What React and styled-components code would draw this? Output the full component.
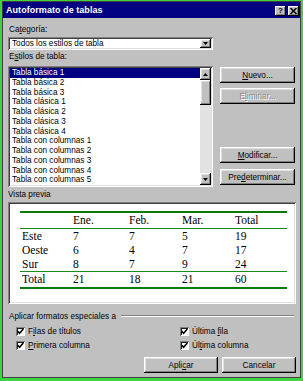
import React from 'react';
import styled, { createGlobalStyle, css } from 'styled-components';

const Global = createGlobalStyle`
  html, body { margin: 0; padding: 0; background: #3fd43f; }
  body { width: 303px; height: 381px; overflow: hidden; }
`;

const raised = css`
  box-shadow: inset -1px -1px 0 #000, inset 1px 1px 0 #fff, inset -2px -2px 0 #808080, inset 2px 2px 0 #dfdfdf;
`;
const sunken = css`
  box-shadow: inset 1px 1px 0 #808080, inset -1px -1px 0 #fff, inset 2px 2px 0 #404040, inset -2px -2px 0 #dfdfdf;
`;

const Window = styled.div`
  margin: 1px 2px 0 2px;
  width: 299px;
  height: 377px;
  box-sizing: border-box;
  border: 1px solid #404040;
  background: #c0c0c0;
  display: flex;
  flex-direction: column;
  font-family: 'Liberation Sans', Arial, sans-serif;
  font-size: 8.2px;
  color: #000;
`;

const TitleBar = styled.div`
  height: 16px;
  background: #000080;
  display: flex;
  align-items: center;
  padding: 0 1px 0 3px;
  gap: 2px;
`;

const TitleText = styled.div`
  flex: 1;
  color: #fff;
  font-weight: bold;
  font-size: 9px;
  letter-spacing: 0.05px;
`;

const TitleButton = styled.div`
  width: 11px;
  height: 10px;
  background: #c0c0c0;
  box-shadow: inset -1px -1px 0 #000, inset 1px 1px 0 #fff, inset -2px -2px 0 #808080;
  display: flex;
  align-items: center;
  justify-content: center;
  font-weight: bold;
  font-size: 8px;
  line-height: 10px;
  margin-top: 1px;
`;

const Body = styled.div`
  flex: 1;
  display: flex;
  flex-direction: column;
  padding: 7px 4px 0 5px;
`;

const Label = styled.div`
  height: 10px;
  line-height: 10px;
  margin-top: ${p => p.$mt || 0}px;
  padding-left: ${p => p.$pl || 0}px;
`;

const U = styled.span`
  text-decoration: underline;
  text-underline-offset: 1px;
`;

const Combo = styled.div`
  margin-top: 2px;
  width: 205px;
  height: 13px;
  box-sizing: border-box;
  background: #fff;
  ${sunken};
  display: flex;
  align-items: center;
  padding: 0 2px 0 4px;
`;

const ComboText = styled.div`
  flex: 1;
`;

const SmallBtn = styled.div`
  width: 11px;
  height: ${p => p.$h || 9}px;
  box-sizing: border-box;
  background: #c0c0c0;
  ${raised};
  display: flex;
  align-items: center;
  justify-content: center;
  flex-shrink: 0;
`;

const ListRow = styled.div`
  margin-top: 4px;
  display: flex;
  gap: 7px;
  align-items: flex-start;
`;

const ListBox = styled.div`
  width: 205px;
  height: 121px;
  box-sizing: border-box;
  background: #fff;
  ${sunken};
  padding: 2px;
  display: flex;
`;

const Items = styled.div`
  flex: 1;
  overflow: hidden;
`;

const Item = styled.div`
  height: 9.75px;
  line-height: 9.75px;
  padding-left: 2px;
  white-space: nowrap;
  background: ${p => (p.$sel ? '#000080' : 'transparent')};
  color: ${p => (p.$sel ? '#fff' : '#000')};
`;

const ScrollBar = styled.div`
  width: 11px;
  display: flex;
  flex-direction: column;
  background: #e2e2e2;
`;

const Track = styled.div`
  flex: 1;
`;

const Thumb = styled.div`
  height: 25px;
  background: #c0c0c0;
  ${raised};
`;

const ButtonCol = styled.div`
  width: 75px;
  display: flex;
  flex-direction: column;
  padding-top: 1px;
`;

const Button = styled.div`
  width: ${p => p.$w || 75}px;
  height: 16px;
  box-sizing: border-box;
  background: #c0c0c0;
  ${raised};
  display: flex;
  align-items: center;
  justify-content: center;
  margin-top: ${p => p.$mt || 0}px;
  color: ${p => (p.$disabled ? '#8a8a8a' : '#000')};
  text-shadow: ${p => (p.$disabled ? '1px 1px 0 #fff' : 'none')};
  white-space: nowrap;
`;

const Preview = styled.div`
  margin-top: 2px;
  height: 102px;
  box-sizing: border-box;
  background: #fff;
  ${sunken};
  padding: 9px 0 0 12px;
`;

const PTable = styled.div`
  width: 267px;
  border-top: 2px solid #0a7a0a;
  border-bottom: 2px solid #0a7a0a;
  font-family: 'Liberation Serif', 'Times New Roman', serif;
  font-size: 11.5px;
  color: #000;
`;

const PRow = styled.div`
  display: grid;
  grid-template-columns: 51px 56px 53px 53px 54px;
  height: ${p => p.$h || 14}px;
  line-height: ${p => p.$h || 14}px;
  border-bottom: ${p => (p.$line ? '1px solid #1a8a1a' : 'none')};
`;

const PCell = styled.div`
  padding-left: 2px;
`;

const GroupHead = styled.div`
  margin-top: 7px;
  height: 10px;
  display: flex;
  align-items: center;
  padding-left: 1px;
`;

const Etched = styled.div`
  flex: 1;
  margin: 0 2px 0 5px;
  height: 0;
  border-top: 1px solid #808080;
  border-bottom: 1px solid #fff;
`;

const CheckGrid = styled.div`
  margin-top: 3px;
  display: grid;
  grid-template-columns: 164px 1fr;
  padding-left: 8px;
`;

const CheckRow = styled.div`
  height: 14px;
  display: flex;
  align-items: center;
  gap: 3px;
`;

const Box = styled.div`
  width: 9px;
  height: 9px;
  box-sizing: border-box;
  background: #fff;
  box-shadow: inset 1px 1px 0 #808080, inset -1px -1px 0 #fff, inset 2px 2px 0 #202020;
  display: flex;
  align-items: center;
  justify-content: center;
`;

const Footer = styled.div`
  margin-top: 5px;
  display: flex;
  justify-content: flex-end;
  gap: 4px;
`;

const Tri = ({ dir = 'down' }) => (
  <svg width="5" height="3" viewBox="0 0 5 3">
    {dir === 'down' ? <polygon points="0,0 5,0 2.5,3" fill="#000" /> : <polygon points="0,3 5,3 2.5,0" fill="#000" />}
  </svg>
);

const Check = ({ checked = true, children }) => (
  <CheckRow>
    <Box>
      {checked && (
        <svg width="7" height="7" viewBox="0 0 7 7">
          <polyline points="0.8,3.2 2.6,5.2 6.3,1" fill="none" stroke="#000" strokeWidth="1.6" />
        </svg>
      )}
    </Box>
    <span>{children}</span>
  </CheckRow>
);

const items = [
  'Tabla básica 1', 'Tabla básica 2', 'Tabla básica 3',
  'Tabla clásica 1', 'Tabla clásica 2', 'Tabla clásica 3', 'Tabla clásica 4',
  'Tabla con columnas 1', 'Tabla con columnas 2', 'Tabla con columnas 3',
  'Tabla con columnas 4', 'Tabla con columnas 5',
];

const rows = [
  ['Este', '7', '7', '5', '19'],
  ['Oeste', '6', '4', '7', '17'],
  ['Sur', '8', '7', '9', '24'],
];

export default function App() {
  return (
    <>
      <Global />
      <Window>
        <TitleBar>
          <TitleText>Autoformato de tablas</TitleText>
          <TitleButton>?</TitleButton>
          <TitleButton>
            <svg width="7" height="6" viewBox="0 0 7 6">
              <path d="M0.5 0 L6.5 6 M6.5 0 L0.5 6" stroke="#000" strokeWidth="1.5" />
            </svg>
          </TitleButton>
        </TitleBar>
        <Body>
          <Label $pl={1}>Ca<U>t</U>egoría:</Label>
          <Combo>
            <ComboText>Todos los estilos de tabla</ComboText>
            <SmallBtn $h={9}><Tri /></SmallBtn>
          </Combo>
          <Label $mt={2} $pl={1}>E<U>s</U>tilos de tabla:</Label>
          <ListRow>
            <ListBox>
              <Items>
                {items.map((t, i) => (
                  <Item key={t} $sel={i === 0}>{t}</Item>
                ))}
              </Items>
              <ScrollBar>
                <SmallBtn $h={12}><Tri dir="up" /></SmallBtn>
                <Thumb />
                <Track />
                <SmallBtn $h={12}><Tri /></SmallBtn>
              </ScrollBar>
            </ListBox>
            <ButtonCol>
              <Button><U>N</U>uevo...</Button>
              <Button $mt={5} $disabled>E<U>l</U>iminar...</Button>
              <Button $mt={43}><U>M</U>odificar...</Button>
              <Button $mt={6}>Pre<U>d</U>eterminar...</Button>
            </ButtonCol>
          </ListRow>
          <Label $mt={3}>Vista previa</Label>
          <Preview>
            <PTable>
              <PRow $line $h={15}>
                <PCell />
                <PCell>Ene.</PCell>
                <PCell>Feb.</PCell>
                <PCell>Mar.</PCell>
                <PCell>Total</PCell>
              </PRow>
              {rows.map((r, i) => (
                <PRow key={r[0]} $line={i === rows.length - 1}>
                  {r.map((c, j) => <PCell key={j}>{c}</PCell>)}
                </PRow>
              ))}
              <PRow $h={15}>
                <PCell>Total</PCell>
                <PCell>21</PCell>
                <PCell>18</PCell>
                <PCell>21</PCell>
                <PCell>60</PCell>
              </PRow>
            </PTable>
          </Preview>
          <GroupHead>
            <span>Aplicar formatos especiales a</span>
            <Etched />
          </GroupHead>
          <CheckGrid>
            <Check>F<U>i</U>las de títulos</Check>
            <Check>Última <U>f</U>ila</Check>
            <Check><U>P</U>rimera columna</Check>
            <Check>Úl<U>t</U>ima columna</Check>
          </CheckGrid>
          <Footer>
            <Button $w={74}>Apli<U>c</U>ar</Button>
            <Button $w={74}>Cancelar</Button>
          </Footer>
        </Body>
      </Window>
    </>
  );
}
